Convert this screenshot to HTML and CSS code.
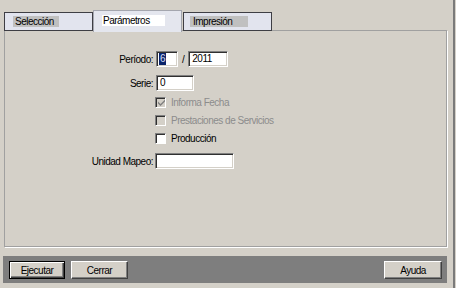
FILE: index.html
```html
<!DOCTYPE html>
<html>
<head>
<meta charset="utf-8">
<link rel="stylesheet" href="styles.css">
</head>
<body>
<div class="window">
  <div class="tabs">
    <div class="tab"><span class="tab-label grey w1">Selección</span></div>
    <div class="tab active"><span class="tab-label white w2">Parámetros</span></div>
    <div class="tab third"><span class="tab-label grey w3">Impresión</span></div>
  </div>
  <div class="panel">
    <div class="row first">
      <span class="label">Período:</span>
      <div class="field f-mes"><span class="sel">6</span></div>
      <span class="slash">/</span>
      <div class="field f-anio">2011</div>
    </div>
    <div class="row second">
      <span class="label">Serie:</span>
      <div class="field f-serie">0</div>
    </div>
    <div class="check-row checks-start disabled">
      <span class="box">
        <svg width="7" height="7" viewBox="0 0 7 7"><path d="M0 2.5 L2.5 5 L7 0.5 L7 2.5 L2.5 7 L0 4.5 Z" fill="#808080"/></svg>
      </span>
      <span class="check-text">Informa Fecha</span>
    </div>
    <div class="check-row disabled">
      <span class="box"></span>
      <span class="check-text">Prestaciones de Servicios</span>
    </div>
    <div class="check-row">
      <span class="box"></span>
      <span class="check-text">Producción</span>
    </div>
    <div class="row last">
      <span class="label">Unidad Mapeo:</span>
      <div class="field f-unidad"></div>
    </div>
  </div>
  <div class="footer">
    <button class="btn default b-ejecutar">Ejecutar</button>
    <button class="btn b-cerrar">Cerrar</button>
    <span class="spacer"></span>
    <button class="btn b-ayuda">Ayuda</button>
  </div>
</div>
</body>
</html>
```

FILE: styles.css
```css
html, body {
  margin: 0;
  padding: 0;
  background: #d4d0c8;
}
body {
  font-family: "Liberation Sans", Arial, sans-serif;
  font-size: 10px;
  letter-spacing: -0.5px;
  color: #000;
}
.window {
  width: 453px;
  height: 288px;
  border-right: 2px solid #7a7a7a;
  box-sizing: content-box;
}
.tabs {
  display: flex;
  align-items: flex-start;
  height: 20px;
  padding: 10px 0 0 4px;
}
.tab {
  position: relative;
  z-index: 1;
  box-sizing: border-box;
  width: 89px;
  height: 19px;
  margin-top: 2px;
  background: #e2e4ee;
  border: 1px solid #3e3e44;
  display: flex;
  align-items: center;
  padding-left: 8px;
}
.tab.third {
  margin-left: 1px;
  padding-left: 6px;
}
.tab.active {
  height: 22px;
  margin-top: 0;
  border: 1px solid #a4a6ae;
  border-bottom: none;
  background: #e4e6ee;
  padding-left: 8px;
  padding-bottom: 2px;
}
.tab-label {
  display: inline-block;
  height: 11px;
  line-height: 11px;
  padding-left: 2px;
  box-sizing: border-box;
}
.tab-label.grey { background: #c0c0c0; }
.tab-label.white { background: #ffffff; }
.w1 { width: 46px; }
.w2 { width: 63px; padding-left: 1px; }
.w3 { width: 58px; padding-left: 3px; }

.panel {
  box-sizing: border-box;
  margin-left: 4px;
  width: 443px;
  height: 217px;
  border: 1px solid #a0a0a0;
  box-shadow: 1px 1px 0 #ffffff;
  padding-top: 20px;
}
.row {
  display: flex;
  align-items: center;
  height: 16px;
}
.row.second { margin-top: 8px; }
.row.last { margin-top: 6px; }
.label {
  box-sizing: border-box;
  width: 150px;
  padding-right: 2px;
  text-align: right;
}
.field {
  box-sizing: border-box;
  height: 16px;
  background: #fff;
  border-top: 1px solid #808080;
  border-left: 1px solid #808080;
  border-bottom: 1px solid #ffffff;
  border-right: 1px solid #ffffff;
  box-shadow: inset 1px 1px 0 #303030, inset -1px -1px 0 #d4d0c8;
  padding-left: 3px;
  line-height: 14px;
  white-space: nowrap;
}
.f-mes { width: 22px; margin-left: 1px; }
.f-anio { width: 40px; }
.f-serie { width: 38px; margin-left: 1px; }
.f-unidad { width: 79px; }
.sel {
  display: inline-block;
  background: #0a246a;
  color: #d8def4;
  line-height: 12px;
  padding: 0 1px;
  margin-left: -1px;
}
.slash {
  margin: 0 4px 0 4px;
}
.check-row {
  display: flex;
  align-items: center;
  height: 18px;
  padding-left: 150px;
}
.checks-start { margin-top: 2px; }
.box {
  box-sizing: border-box;
  width: 11px;
  height: 11px;
  background: #fff;
  border-top: 1px solid #808080;
  border-left: 1px solid #808080;
  border-bottom: 1px solid #ffffff;
  border-right: 1px solid #ffffff;
  box-shadow: inset 1px 1px 0 #303030;
  display: flex;
  align-items: center;
  justify-content: center;
  padding: 1px 0 0 1px;
}
.disabled .box { background: #d4d0c8; }
.check-text { margin-left: 5px; }
.disabled .check-text { color: #8c8c8c; }

.footer {
  box-sizing: border-box;
  margin-top: 9px;
  margin-left: 3px;
  width: 444px;
  height: 27px;
  background: #7e7e7e;
  display: flex;
  align-items: flex-start;
  padding: 5px 5px 0 6px;
}
.spacer { flex: 1; }
.btn {
  box-sizing: border-box;
  height: 18px;
  padding: 0;
  font: inherit;
  letter-spacing: inherit;
  color: #000;
  background: #d4d0c8;
  border-top: 1px solid #ffffff;
  border-left: 1px solid #ffffff;
  border-bottom: 1px solid #404040;
  border-right: 1px solid #404040;
  box-shadow: inset -1px -1px 0 #808080;
  text-align: center;
  line-height: 15px;
}
.btn.default {
  border: 1px solid #000;
  box-shadow: inset 1px 1px 0 #ffffff, inset -1px -1px 0 #404040, inset -2px -2px 0 #808080;
}
.b-ejecutar { width: 56px; }
.b-cerrar { width: 57px; margin-left: 6px; }
.b-ayuda { width: 58px; }
```
